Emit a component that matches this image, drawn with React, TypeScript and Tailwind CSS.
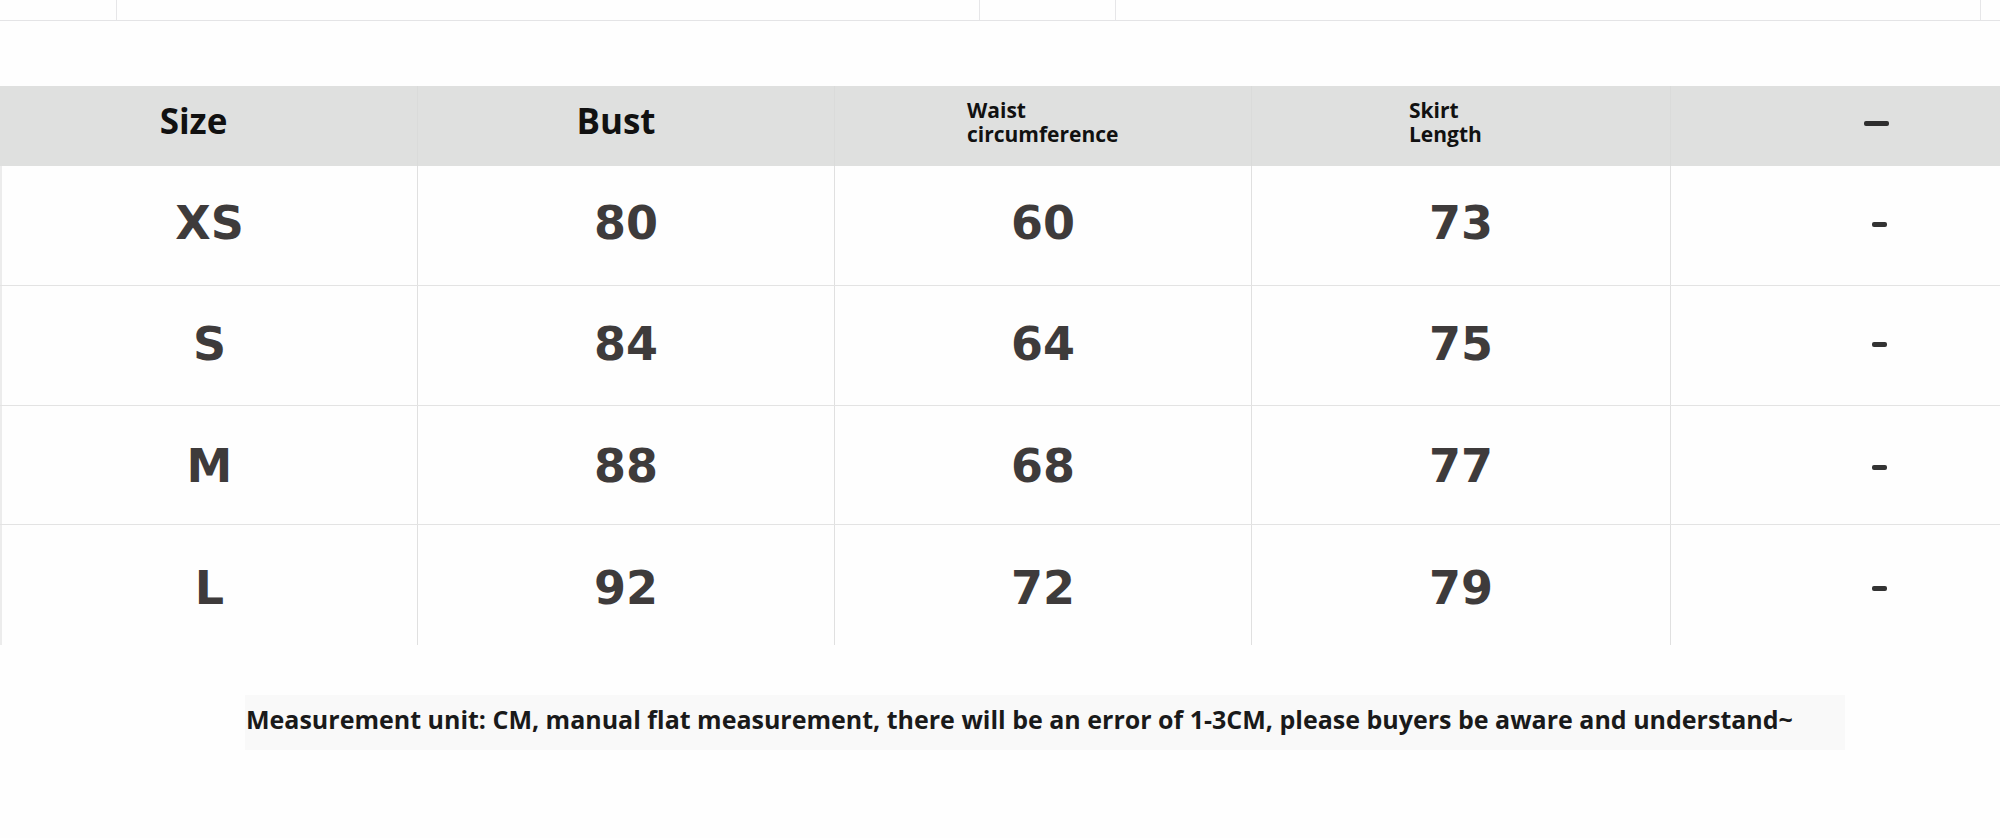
import React from "react";

const rows = [
  ["XS", "80", "60", "73", "-"],
  ["S", "84", "64", "75", "-"],
  ["M", "88", "68", "77", "-"],
  ["L", "92", "72", "79", "-"],
];
const heights = ["h-[119px]", "h-[120px]", "h-[119px]", "h-[121px]"];
const pads = ["pb-[5px]", "pb-[4px]", "pt-[2px]", "pt-[5px]"];

export default function App() {
  return (
    <div className="w-[2000px] h-[838px] bg-[#fefefe] overflow-hidden" style={{ fontFamily: '"Open Sans", sans-serif' }}>
      {/* remnant of previous table */}
      <div className="grid grid-cols-[116px_863px_136px_865px_20px] h-[21px] border-b border-[#e4e4e6]">
        <div />
        <div className="border-l border-[#e6e6e8]" />
        <div className="border-l border-[#e6e6e8]" />
        <div className="border-l border-[#e6e6e8]" />
        <div className="border-l border-[#e6e6e8]" />
      </div>
      <div className="h-[65px]" />
      {/* header */}
      <div className="w-[2087px] grid grid-cols-[417px_417px_417px_419px_417px] h-[80px] bg-[#dfe0df] text-[#111]">
        <div className="flex items-center justify-center pr-[30px] pb-[11px]">
          <span className="text-[35px] font-bold leading-none">Size</span>
        </div>
        <div className="flex items-center justify-center pr-[20px] border-l border-[#dadbda] pb-[11px]">
          <span className="text-[35px] font-bold leading-none">Bust</span>
        </div>
        <div className="flex items-center pl-[132px] border-l border-[#dadbda] pb-[8px]">
          <span className="text-[21px] font-bold leading-[24px]">Waist<br />circumference</span>
        </div>
        <div className="flex items-center pl-[157px] border-l border-[#dadbda] pb-[8px]">
          <span className="text-[21px] font-bold leading-[24px]">Skirt<br />Length</span>
        </div>
        <div className="flex items-center justify-center border-l border-[#dadbda] pb-[6px] pr-[6px]">
          <div className="w-[25px] h-[5px] rounded-[2px] bg-[#2e2e2e]" />
        </div>
      </div>
      {/* data rows */}
      {rows.map((r, i) => (
        <div
          key={i}
          className={`w-[2087px] grid grid-cols-[417px_417px_417px_419px_417px] ${heights[i]} ${i > 0 ? "border-t border-[#e3e3e3]" : ""}`}
        >
          {r.map((c, j) => (
            <div
              key={j}
              className={`flex items-center justify-center text-[#3e3b3b] ${pads[i]} ${j === 0 ? "border-l-2 border-[#ececec]" : "border-l border-[#e0e0e0]"}`}
              style={{ fontFamily: '"DejaVu Sans", sans-serif' }}
            >
              {c === "-" ? (
                <div className="w-[15px] h-[5px] rounded-[2px] bg-[#333] mt-[2px]" />
              ) : (
                <span className="text-[46px] font-bold leading-none">{c}</span>
              )}
            </div>
          ))}
        </div>
      ))}
      <div className="h-[50px]" />
      <div className="ml-[245px] w-[1600px] h-[55px] bg-[#f9f9f9] flex items-center pl-[1px] pb-[5px]">
        <span className="text-[25px] font-bold text-[#1a1a1a] whitespace-nowrap">
          Measurement unit: CM, manual flat measurement, there will be an error of 1-3CM, please buyers be aware and understand~
        </span>
      </div>
    </div>
  );
}
